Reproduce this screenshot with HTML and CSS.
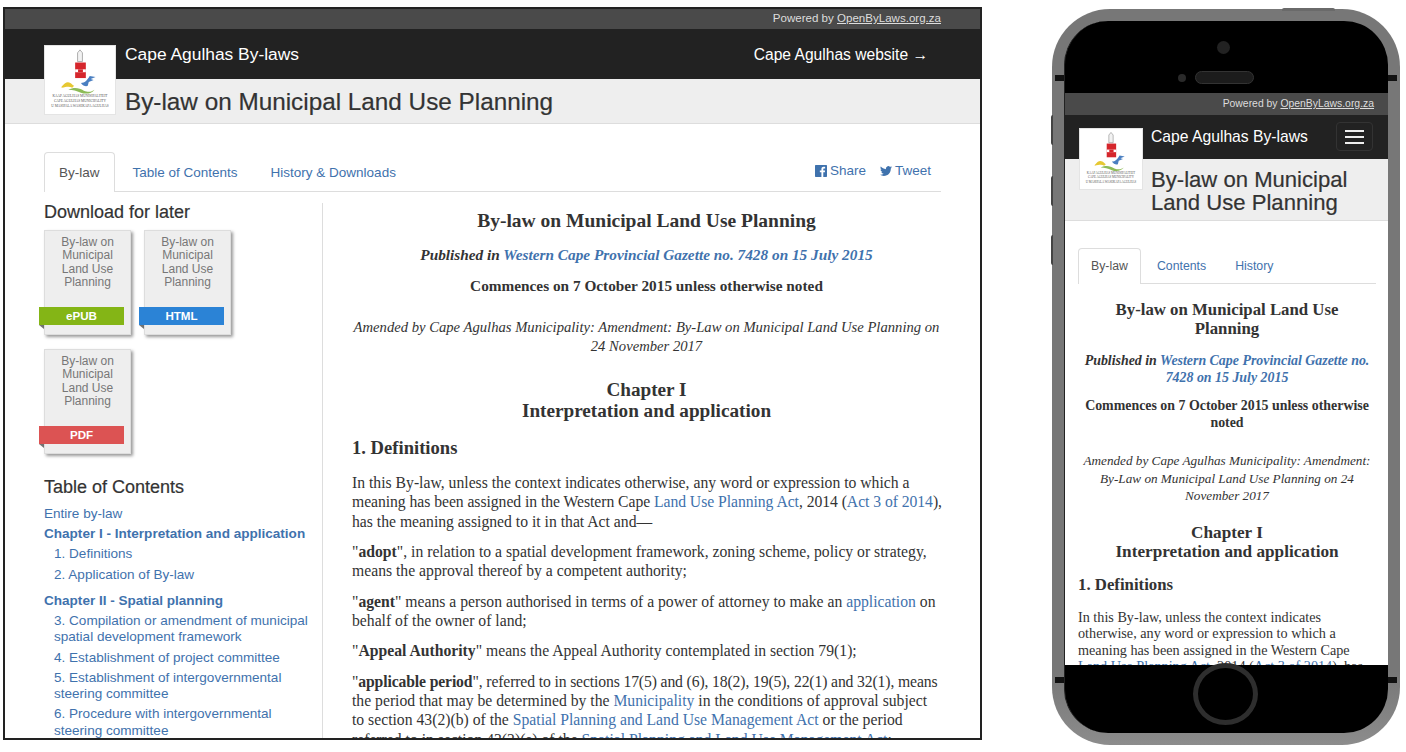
FILE: index.html
```html
<!DOCTYPE html>
<html lang="en">

    <head>
        <meta charset="UTF-8">
        <title>Cape Agulhas By-laws</title>
        <link rel="stylesheet" href="styles.css">
    </head>

    <body>
        <div class="stage">
            <!-- desktop -->
            <div class="browser">
                <div class="topbar">Powered by&nbsp;<a href="#">OpenByLaws.org.za</a></div>
                <div class="navbar">
                    <span>Cape Agulhas By-laws</span>
                    <span class="site-link">Cape Agulhas website →</span>
                </div>
                <div class="band"><h1>By-law on Municipal Land Use Planning</h1></div>
                <svg class="logo" viewBox="0 0 72 70">
                    <path d="M33.5 16v-9l2.5-3 2.5 3v9z" fill="#f2f2f2" stroke="#999" stroke-width="0.8"/>
                    <rect x="31" y="17" width="11" height="16" fill="#d5262c"/>
                    <rect x="31" y="24" width="11" height="3" fill="#fff"/>
                    <rect x="34" y="24" width="5" height="3" fill="#d5262c"/>
                    <path d="M17 42c3-4 6-6 9-4 2 1 2 2 4 3l-2 2c-3-2-6-1-11 0z" fill="#e6c832"/>
                    <path d="M24 45c6-3 11-2 16 1 5 2 8 1 11-1-3 4-9 5-14 3-5-2-8-3-13-3z" fill="#8dbb57"/>
                    <path d="M37 38c4 0 6-2 9-7l6 1-5 2 3 1-5 2-1 4c-2 1-5 0-7-3z" fill="#4a7fc1"/>
                    <text class="logo-txt" x="36" y="52.5">KAAP AGULHAS MUNISIPALITEIT</text>
                    <text class="logo-txt" x="36" y="57.5">CAPE AGULHAS MUNICIPALITY</text>
                    <text class="logo-txt" x="36" y="63">U MASIPALA WASEKAPA AGULHAS</text>
                </svg>

                <div class="content">
                    <div class="tabs">
                        <a class="tab active" href="#">By-law</a>
                        <a class="tab" href="#">Table of Contents</a>
                        <a class="tab" href="#">History &amp; Downloads</a>
                        <div class="social">
                            <a href="#"><svg viewBox="0 0 24 24"><path d="M22.68 0H1.32C.59 0 0 .59 0 1.32v21.36C0 23.41.59 24 1.32 24h11.5v-9.29H9.69v-3.62h3.13V8.41c0-3.1 1.89-4.79 4.66-4.79 1.33 0 2.47.1 2.8.14v3.24h-1.92c-1.5 0-1.8.72-1.8 1.77v2.31h3.59l-.47 3.62h-3.12V24h6.12c.73 0 1.32-.59 1.32-1.32V1.32C24 .59 23.41 0 22.68 0z"/></svg>Share</a>
                            <a href="#"><svg viewBox="0 0 24 24"><path d="M23.953 4.57a10 10 0 01-2.825.775 4.958 4.958 0 002.163-2.723c-.951.555-2.005.959-3.127 1.184a4.92 4.92 0 00-8.384 4.482C7.69 8.095 4.067 6.13 1.64 3.162a4.822 4.822 0 00-.666 2.475c0 1.71.87 3.213 2.188 4.096a4.904 4.904 0 01-2.228-.616v.06a4.923 4.923 0 003.946 4.827 4.996 4.996 0 01-2.212.085 4.936 4.936 0 004.604 3.417 9.867 9.867 0 01-6.102 2.105c-.39 0-.779-.023-1.17-.067a13.995 13.995 0 007.557 2.209c9.053 0 13.998-7.496 13.998-13.985 0-.21 0-.42-.015-.63A9.935 9.935 0 0024 4.59z"/></svg>Tweet</a>
                        </div>
                    </div>

                    <div class="columns">
                        <div class="sidebar">
                            <h3 class="side-title">Download for later</h3>
                            <div class="books">
                                <div class="book">By-law on Municipal Land Use Planning<span class="ribbon green">ePUB</span></div>
                                <div class="book">By-law on Municipal Land Use Planning<span class="ribbon blue">HTML</span></div>
                                <div class="book">By-law on Municipal Land Use Planning<span class="ribbon red">PDF</span></div>
                            </div>
                            <h3 class="side-title toc-title">Table of Contents</h3>
                            <ul class="toc">
                                <li><a href="#">Entire by-law</a></li>
                                <li class="chap"><a href="#">Chapter I - Interpretation and application</a></li>
                                <li class="sec"><a href="#">1. Definitions</a></li>
                                <li class="sec"><a href="#">2. Application of By-law</a></li>
                                <li class="chap gap"><a href="#">Chapter II - Spatial planning</a></li>
                                <li class="sec"><a href="#">3. Compilation or amendment of municipal spatial development framework</a></li>
                                <li class="sec"><a href="#">4. Establishment of project committee</a></li>
                                <li class="sec"><a href="#">5. Establishment of intergovernmental steering committee</a></li>
                                <li class="sec"><a href="#">6. Procedure with intergovernmental steering committee</a></li>
                            </ul>
                        </div>

                        <div class="doc">
                            <h2 class="doc-title">By-law on Municipal Land Use Planning</h2>
                            <p class="mid pub"><b><i>Published in <a href="#">Western Cape Provincial Gazette no. 7428 on 15 July 2015</a></i></b></p>
                            <p class="mid com"><b>Commences on 7 October 2015 unless otherwise noted</b></p>
                            <p class="mid amend"><i>Amended by Cape Agulhas Municipality: Amendment: By-Law on Municipal Land Use Planning on<br>24 November 2017</i></p>
                            <h2 class="chapter">Chapter I<br>Interpretation and application</h2>
                            <h3 class="sec-title">1. Definitions</h3>
                            <p>In this By-law, unless the context indicates otherwise, any word or expression to which a<br><span class="snug">meaning has been assigned in the Western Cape <a href="#">Land Use Planning Act</a>, 2014 (<a href="#">Act 3 of 2014</a>),</span><br>has the meaning assigned to it in that Act and—</p>
                            <p>"<b>adopt</b>", in relation to a spatial development framework, zoning scheme, policy or strategy,<br>means the approval thereof by a competent authority;</p>
                            <p>"<b>agent</b>" means a person authorised in terms of a power of attorney to make an <a href="#">application</a> on<br>behalf of the owner of land;</p>
                            <p>"<b>Appeal Authority</b>" means the Appeal Authority contemplated in section 79(1);</p>
                            <p><span class="tight">"<b>applicable period</b>", referred to in sections 17(5) and (6), 18(2), 19(5), 22(1) and 32(1), means</span><br>the period that may be determined by the <a href="#">Municipality</a> in the conditions of approval subject<br>to section 43(2)(b) of the <a href="#">Spatial Planning and Land Use Management Act</a> or the period<br>referred to in section 43(2)(e) of the <a href="#">Spatial Planning and Land Use Management Act</a>;</p>
                        </div>
                    </div>
                </div>
            </div>

            <!-- phone -->
            <div class="phone">
                <i class="btn-top"></i>
                <i class="btn-side b1"></i>
                <i class="btn-side b2"></i>
                <i class="btn-side b3"></i>
                <i class="strip sl1"></i>
                <i class="strip sr1"></i>
                <i class="strip sl2"></i>
                <i class="strip sr2"></i>
                <div class="phone-body">
                    <div class="bezel-top">
                        <i class="cam"></i>
                        <div class="speaker-row"><i class="dot"></i><i class="speaker"></i></div>
                    </div>
                    <div class="screen">
                        <div class="topbar m-topbar">Powered by&nbsp;<a href="#">OpenByLaws.org.za</a></div>
                        <div class="navbar m-navbar">
                            <span>Cape Agulhas By-laws</span>
                            <span class="burger"><i></i><i></i><i></i></span>
                        </div>
                        <div class="band m-band"><h1>By-law on Municipal Land Use Planning</h1></div>
                        <svg class="logo m-logo" viewBox="0 0 72 70">
                            <path d="M33.5 16v-9l2.5-3 2.5 3v9z" fill="#f2f2f2" stroke="#999" stroke-width="0.8"/>
                            <rect x="31" y="17" width="11" height="16" fill="#d5262c"/>
                            <rect x="31" y="24" width="11" height="3" fill="#fff"/>
                            <rect x="34" y="24" width="5" height="3" fill="#d5262c"/>
                            <path d="M17 42c3-4 6-6 9-4 2 1 2 2 4 3l-2 2c-3-2-6-1-11 0z" fill="#e6c832"/>
                            <path d="M24 45c6-3 11-2 16 1 5 2 8 1 11-1-3 4-9 5-14 3-5-2-8-3-13-3z" fill="#8dbb57"/>
                            <path d="M37 38c4 0 6-2 9-7l6 1-5 2 3 1-5 2-1 4c-2 1-5 0-7-3z" fill="#4a7fc1"/>
                            <text class="logo-txt" x="36" y="52.5">KAAP AGULHAS MUNISIPALITEIT</text>
                            <text class="logo-txt" x="36" y="57.5">CAPE AGULHAS MUNICIPALITY</text>
                            <text class="logo-txt" x="36" y="63">U MASIPALA WASEKAPA AGULHAS</text>
                        </svg>
                        <div class="m-content">
                            <div class="tabs m-tabs">
                                <a class="tab active" href="#">By-law</a>
                                <a class="tab" href="#">Contents</a>
                                <a class="tab" href="#">History</a>
                            </div>
                            <div class="doc m-doc">
                                <h2 class="doc-title">By-law on Municipal Land Use<br>Planning</h2>
                                <p class="mid pub"><b><i>Published in <a href="#">Western Cape Provincial Gazette no. 7428 on 15 July 2015</a></i></b></p>
                                <p class="mid com"><b>Commences on 7 October 2015 unless otherwise noted</b></p>
                                <p class="mid amend"><i>Amended by Cape Agulhas Municipality: Amendment: By-Law on Municipal Land Use Planning on 24 November 2017</i></p>
                                <h2 class="chapter">Chapter I<br>Interpretation and application</h2>
                                <h3 class="sec-title">1. Definitions</h3>
                                <p>In this By-law, unless the context indicates otherwise, any word or expression to which a meaning has been assigned in the Western Cape <a href="#">Land Use Planning Act</a>, 2014 (<a href="#">Act 3 of 2014</a>), has the meaning assigned to it in that Act and—</p>
                            </div>
                        </div>
                    </div>
                    <div class="bezel-bottom"><i class="home"></i></div>
                </div>
            </div>
        </div>
    </body>

</html>
```

FILE: styles.css
```css
* {
    margin: 0;
    padding: 0;
    box-sizing: border-box;
    list-style: none;
}

body {
    background: #fff;
    color: #333;
    font-family: "Liberation Sans", Arial, sans-serif;
    width: 1406px;
    height: 752px;
    overflow: hidden;
}

a {
    color: #3f72ad;
    text-decoration: none;
}

.logo-txt {
    font-family: "Liberation Serif", serif;
    font-size: 3.6px;
    text-anchor: middle;
    fill: #555;
}

.stage {
    display: flex;
    align-items: flex-start;
    padding: 7px 0 0 3px;
}

/* desktop window */
.browser {
    position: relative;
    width: 979px;
    height: 733px;
    border: 2px solid #222;
    overflow: hidden;
    flex-shrink: 0;
}

.topbar {
    height: 20px;
    background: #4a4a4a;
    color: #ddd;
    font-size: 11.55px;
    line-height: 18px;
    text-align: right;
    padding-right: 39px;
}

.topbar a {
    color: #ddd;
    text-decoration: underline;
}

.navbar {
    height: 50px;
    background: #222;
    color: #fff;
    font-size: 17.4px;
    padding: 16px 52px 0 120px;
    display: flex;
    justify-content: space-between;
    line-height: 19px;
}

.site-link {
    font-size: 15.6px;
}

.band {
    height: 45px;
    background: #eee;
    border-bottom: 1px solid #ddd;
    padding: 9px 0 0 120px;
}

.band h1 {
    font-size: 24.3px;
    font-weight: 400;
    line-height: 27px;
    color: #333;
    -webkit-text-stroke: 0.2px #333;
}

.logo {
    position: absolute;
    left: 39px;
    top: 36px;
    width: 72px;
    height: 70px;
    background: #fff;
    border: 1px solid #e4e4e4;
}

.content {
    padding: 28px 39px 0;
}

.tabs {
    display: flex;
    height: 40px;
    border-bottom: 1px solid #ddd;
}

.tab {
    height: 40px;
    padding: 11px 14px 0;
    margin-right: 3px;
    font-size: 13.5px;
    line-height: 17px;
    border: 1px solid transparent;
    border-bottom: 0;
}

.tab.active {
    color: #555;
    background: #fff;
    border-color: #ddd;
    border-radius: 4px 4px 0 0;
}

.social {
    margin-left: auto;
    padding: 10px 10px 0 0;
    display: flex;
    gap: 14px;
    font-size: 13.5px;
    line-height: 17px;
}

.social a {
    display: flex;
    align-items: center;
    height: 17px;
}

.social svg {
    width: 12px;
    height: 12px;
    fill: #3f72ad;
    margin-right: 3px;
}

.columns {
    display: flex;
    padding-top: 11px;
}

.sidebar {
    width: 279px;
    height: 540px;
    border-right: 1px solid #ddd;
    flex-shrink: 0;
}

.side-title {
    font-size: 18px;
    font-weight: 400;
    line-height: 18px;
    -webkit-text-stroke: 0.2px #333;
}

.books {
    display: flex;
    flex-wrap: wrap;
    gap: 14px 13px;
    margin-top: 9px;
    width: 210px;
}

.book {
    position: relative;
    width: 87px;
    height: 105px;
    padding: 5px 12px 0;
    background: #eee;
    border: 1px solid #ddd;
    box-shadow: 2px 2px 3px #999;
    color: #777;
    font-size: 12px;
    line-height: 13.4px;
    text-align: center;
}

.ribbon {
    position: absolute;
    left: -6px;
    top: 76px;
    width: 85px;
    height: 18px;
    color: #fff;
    font-size: 11.6px;
    font-weight: 700;
    line-height: 17px;
}

.ribbon:after {
    content: "";
    position: absolute;
    left: 0;
    top: 18px;
    border-left: 5px solid transparent;
    border-top: 4px solid rgba(0, 0, 0, 0.55);
}

.green {
    background: #84b516;
}

.blue {
    background: #2b83d6;
}

.red {
    background: #dc5353;
}

.toc-title {
    margin-top: 24px;
}

.toc {
    margin-top: 10px;
    padding-right: 10px;
    font-size: 13.55px;
    line-height: 16.3px;
}

.toc li {
    margin-bottom: 3.9px;
}

.toc .chap {
    font-weight: 700;
}

.toc .gap {
    margin-top: 10px;
}

.toc .sec {
    padding-left: 10px;
}

.doc {
    flex: 1;
    min-width: 0;
    padding-left: 29px;
    font-family: "Liberation Serif", "Times New Roman", serif;
    font-size: 15.7px;
    line-height: 19.2px;
    white-space: nowrap;
}

.doc p {
    margin-bottom: 11.3px;
}

.doc-title {
    font-size: 19.5px;
    line-height: 22px;
    text-align: center;
    margin: 7px 0 13px;
}

.mid {
    text-align: center;
}

.doc .pub,
.doc .com {
    font-size: 15.3px;
}

.doc .com {
    margin-bottom: 23px;
}

.doc .amend {
    font-size: 14.65px;
}

.tight {
    letter-spacing: -0.13px;
}

.snug {
    letter-spacing: -0.05px;
}

.chapter {
    font-size: 19.2px;
    line-height: 21px;
    text-align: center;
    margin: 23px 0 16px;
}

.sec-title {
    font-size: 18.6px;
    line-height: 21px;
    margin-bottom: 15px;
}

/* phone */
.phone {
    position: relative;
    width: 348px;
    height: 736px;
    margin: 2px 0 0 70px;
    padding: 12px;
    background: linear-gradient(#777 0, #777 90%, #8c8c8c 100%);
    border-radius: 58px;
    flex-shrink: 0;
}

.phone-body {
    height: 712px;
    background: #000;
    border-radius: 44px;
    overflow: hidden;
    display: flex;
    flex-direction: column;
    border-left: 1px solid #222;
}

.btn-top {
    position: absolute;
    left: 230px;
    top: -1px;
    width: 53px;
    height: 3px;
    background: #6a6a6a;
    border-radius: 2px 2px 0 0;
}

.btn-side {
    position: absolute;
    left: -1px;
    width: 2px;
    background: #444;
    border-radius: 2px 0 0 2px;
}

.b1 {
    top: 106px;
    height: 30px;
}

.b2 {
    top: 167px;
    height: 30px;
}

.b3 {
    top: 226px;
    height: 30px;
}

.strip {
    position: absolute;
    width: 9px;
    height: 6px;
    background: #111;
}

.sl1,
.sr1 {
    top: 66px;
}

.sl2,
.sr2 {
    top: 668px;
}

.sl1,
.sl2 {
    left: 3px;
}

.sr1,
.sr2 {
    right: 3px;
}

.bezel-top {
    height: 72px;
    flex-shrink: 0;
    position: relative;
}

.cam {
    position: absolute;
    left: 152px;
    top: 20px;
    width: 13px;
    height: 13px;
    border-radius: 50%;
    background: #222;
}

.speaker-row {
    position: absolute;
    left: 113px;
    top: 50px;
    display: flex;
    align-items: center;
    gap: 9px;
}

.dot {
    width: 8px;
    height: 8px;
    border-radius: 50%;
    background: #2a2a2a;
}

.speaker {
    width: 59px;
    height: 13px;
    border-radius: 7px;
    background: #1c1c1c;
    border: 1px solid #333;
}

.screen {
    position: relative;
    height: 572px;
    flex-shrink: 0;
    background: #fff;
    overflow: hidden;
}

.m-topbar {
    height: 22px;
    font-size: 10.4px;
    line-height: 21px;
    padding-right: 14px;
}

.m-navbar {
    height: 44px;
    padding: 13px 15px 0 86px;
    font-size: 15.7px;
    line-height: 18px;
}

.burger {
    width: 37px;
    height: 29px;
    margin-top: -6px;
    border: 1px solid #333;
    border-radius: 4px;
    display: flex;
    flex-direction: column;
    justify-content: center;
    align-items: center;
    gap: 4px;
}

.burger i {
    display: block;
    width: 19px;
    height: 2px;
    background: #eee;
}

.m-band {
    height: 62px;
    padding: 9px 20px 0 86px;
}

.m-band h1 {
    font-size: 22.1px;
    line-height: 23px;
}

.m-logo {
    left: 14px;
    top: 35px;
    width: 64px;
    height: 62px;
}

.m-content {
    padding: 27px 12px 0 13px;
}

.m-tabs {
    height: 36px;
}

.m-tabs .tab {
    height: 36px;
    padding: 10px 12px 0;
    font-size: 12.3px;
    line-height: 15px;
    margin-right: 3px;
}

.m-doc {
    padding-left: 0;
    font-size: 14.2px;
    line-height: 16.6px;
    white-space: normal;
}

.m-doc p {
    margin-bottom: 10px;
}

.m-doc .doc-title {
    font-size: 16.8px;
    line-height: 19px;
    margin: 16px 0 14px;
}

.m-doc .pub,
.m-doc .com {
    font-size: 13.9px;
    line-height: 17px;
}

.m-doc .pub {
    margin-bottom: 11px;
}

.m-doc .com {
    margin-bottom: 21px;
}

.m-doc .amend {
    font-size: 13.2px;
    line-height: 17.5px;
}

.m-doc .chapter {
    font-size: 17.2px;
    line-height: 19px;
    margin: 18px 0 15px;
}

.m-doc .sec-title {
    font-size: 16.8px;
    line-height: 18px;
    margin-bottom: 15px;
}

.bezel-bottom {
    flex: 1;
    position: relative;
}

.home {
    position: absolute;
    left: 128px;
    top: -2px;
    width: 65px;
    height: 62px;
    border: 5px solid #2e2e2e;
    border-radius: 50%;
}
```
